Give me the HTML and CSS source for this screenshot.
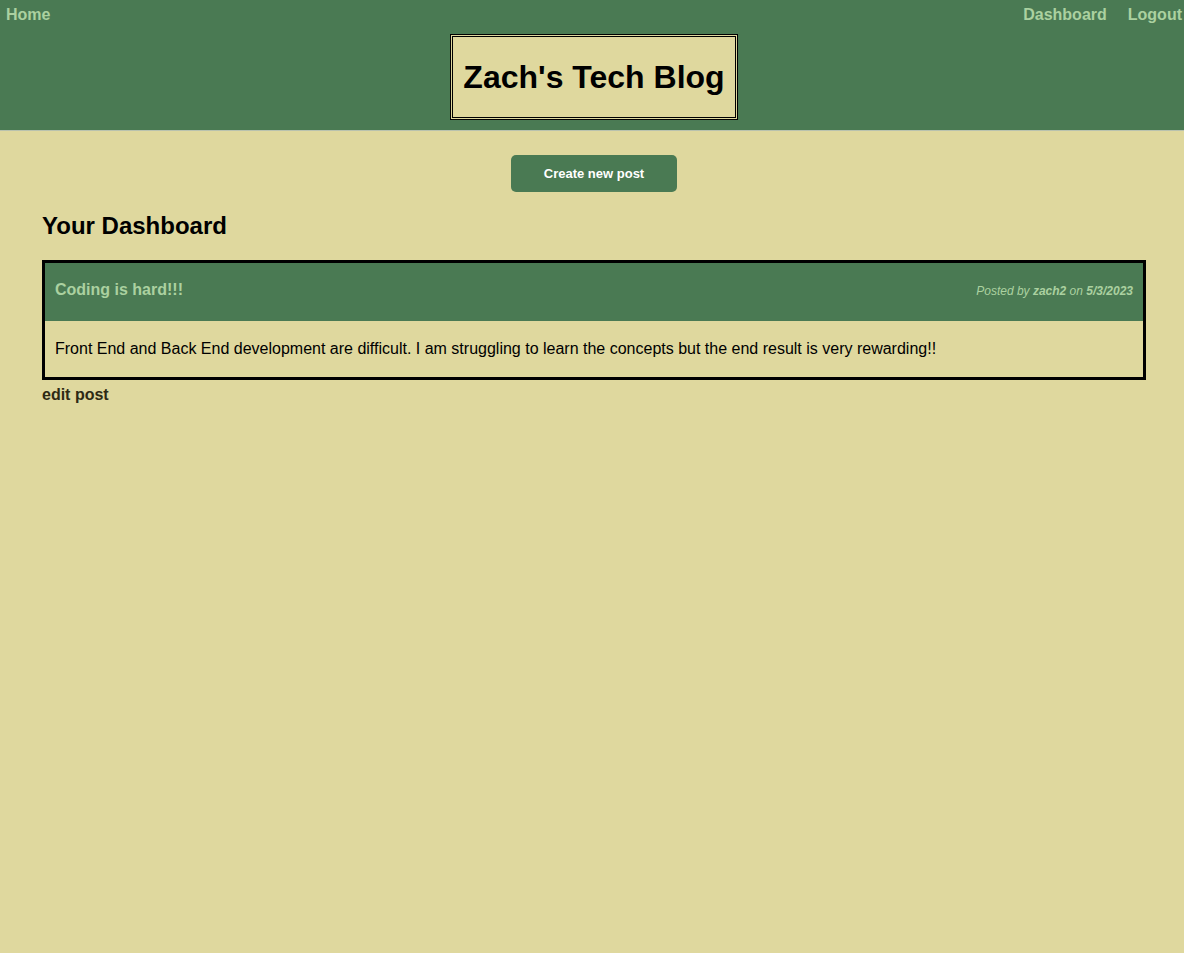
FILE: index.html
```html
<!DOCTYPE html>
<html lang="en">
<head>
<meta charset="utf-8">
<title>Zach's Tech Blog</title>
<link rel="stylesheet" href="styles.css">
</head>
<body>
<header class="site-header">
  <nav class="nav">
    <a class="nav-link" href="#">Home</a>
    <div class="nav-right">
      <a class="nav-link" href="#">Dashboard</a>
      <a class="nav-link" href="#">Logout</a>
    </div>
  </nav>
  <div class="title-wrap">
    <h1 class="site-title">Zach's Tech Blog</h1>
  </div>
</header>
<main class="main">
  <div class="btn-row">
    <button class="btn-create">Create new post</button>
  </div>
  <h2 class="dash-title">Your Dashboard</h2>
  <article class="post">
    <div class="post-header">
      <h3 class="post-title">Coding is hard!!!</h3>
      <p class="post-meta">Posted by <b>zach2</b> on <b>5/3/2023</b></p>
    </div>
    <div class="post-body">Front End and Back End development are difficult. I am struggling to learn the concepts but the end result is very rewarding!!</div>
  </article>
  <a class="edit-link" href="#">edit post</a>
</main>
</body>
</html>
```

FILE: styles.css
```css
* { box-sizing: border-box; }
html, body {
  margin: 0;
  padding: 0;
  background: #dfd89e;
  font-family: "Liberation Sans", Arial, sans-serif;
  color: #000;
  min-height: 100%;
}
.site-header {
  background: #4a7a53;
  height: 131px;
  border-bottom: 1px solid #b9c2ae;
}
.nav {
  display: flex;
  justify-content: space-between;
  padding: 6px 2px 0 6px;
}
.nav-right {
  display: flex;
  gap: 21px;
}
.nav-link {
  color: #abd1a0;
  font-weight: bold;
  font-size: 16px;
  text-decoration: none;
}
.title-wrap {
  display: flex;
  justify-content: center;
  padding-left: 4px;
  margin-top: 10px;
}
.site-title {
  margin: 0;
  height: 86px;
  width: 288px;
  display: flex;
  align-items: center;
  justify-content: center;
  border: 3px double #000;
  background: #dfd89e;
  font-size: 32px;
  font-weight: bold;
}
.main {
  padding: 0 38px 0 42px;
}
.btn-row {
  display: flex;
  justify-content: center;
  padding-top: 24px;
}
.btn-create {
  width: 166px;
  height: 37px;
  background: #4a7a53;
  color: #fff;
  border: none;
  border-radius: 5px;
  font-family: "Liberation Sans", Arial, sans-serif;
  font-weight: bold;
  font-size: 13px;
}
.dash-title {
  margin: 20px 0 20px;
  font-size: 24px;
  font-weight: bold;
}
.post {
  border: 3px solid #000;
}
.post-header {
  background: #4a7a53;
  height: 58px;
  display: flex;
  justify-content: space-between;
  align-items: baseline;
  padding: 18px 10px 0 10px;
}
.post-title {
  margin: 0;
  font-size: 16px;
  font-weight: bold;
  color: #abd1a0;
}
.post-meta {
  margin: 0;
  font-size: 12px;
  font-style: italic;
  color: #abd1a0;
}
.post-body {
  padding: 19px 10px;
  font-size: 16px;
}
.edit-link {
  display: inline-block;
  margin-top: 6px;
  font-weight: bold;
  font-size: 16px;
  color: #2e2a14;
  text-decoration: none;
}
```
